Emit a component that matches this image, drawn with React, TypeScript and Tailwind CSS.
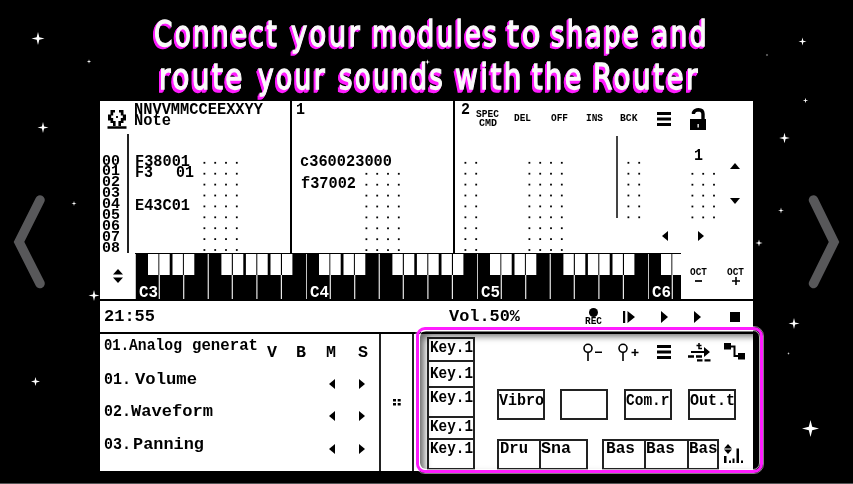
import { useLayoutEffect, useRef, type ReactNode } from "react";

// One line of text stretched to the width given by its classes.
function Fit({ className = "", children }: { className?: string; children: ReactNode }) {
  const box = useRef<HTMLDivElement>(null);
  const text = useRef<HTMLSpanElement>(null);
  useLayoutEffect(() => {
    if (!box.current || !text.current) return;
    text.current.style.transform = "none";
    const ratio = box.current.getBoundingClientRect().width / text.current.getBoundingClientRect().width;
    text.current.style.transform = `scaleX(${ratio})`;
  });
  return (
    <div ref={box} className={`shrink-0 ${className}`}>
      <span ref={text} className="inline-block origin-left whitespace-pre align-top">{children}</span>
    </div>
  );
}

const T = ({ className = "", children }: { className?: string; children: ReactNode }) => (
  <Fit className={`h-3 text-[16.5px] leading-3 ${className}`}>{children}</Fit>
);

const Small = ({ className = "", children }: { className?: string; children: ReactNode }) => (
  <Fit className={`h-[9px] text-[10.5px] leading-[9px] ${className}`}>{children}</Fit>
);

// Empty tracker steps, drawn as a dot matrix.
function Dots({ cols, rows, className = "" }: { cols: number; rows: number; className?: string }) {
  return (
    <svg className={`shrink-0 ${className}`} width={cols * 10.8} height={rows * 10.9}>
      {Array.from({ length: rows * cols }, (_, i) => (
        <rect key={i} x={(i % cols) * 10.8 + 4.5} y={Math.floor(i / cols) * 10.9 + 7.9} width="1.8" height="1.8" />
      ))}
    </svg>
  );
}

const Left = ({ className = "" }: { className?: string }) => (
  <svg className={`h-[10px] w-[6px] shrink-0 ${className}`} viewBox="0 0 6 10"><path d="M6 0V10L0 5Z" /></svg>
);
const Right = ({ className = "" }: { className?: string }) => (
  <svg className={`h-[10px] w-[6px] shrink-0 ${className}`} viewBox="0 0 6 10"><path d="M0 0V10L6 5Z" /></svg>
);
const Play = ({ className = "" }: { className?: string }) => (
  <svg className={`h-3 w-[7px] shrink-0 ${className}`} viewBox="0 0 7 12"><path d="M0 0V12L7 6Z" /></svg>
);
const Menu = ({ className = "" }: { className?: string }) => (
  <svg className={`h-[14px] w-[14px] shrink-0 ${className}`} viewBox="0 0 14 14">
    <path d="M0 0H14V3H0ZM0 5.4H14V8.6H0ZM0 11H14V14H0Z" />
  </svg>
);

const boxes = [13, 24.3, 37.5, 48.9, 86.4, 97.9, 110.9, 122.3, 135.5, 147];
const Octave = ({ label, className = "w-[171px]" }: { label: string; className?: string }) => (
  <div className={`relative h-[46px] shrink-0 ${className}`}>
    <svg className="h-[46px] w-full">
      {boxes.map((x) => <rect key={x} x={x} y="1" width="10.4" height="21" fill="#fff" />)}
      {[24.3, 48.7, 97.3, 121.9, 146.4].map((x) => <rect key={x} x={x - 0.6} y="22" width="1.2" height="24" fill="#e8e8e8" />)}
      <path d="M.3 1V46M73.3 1V46" stroke="#c4c4c4" strokeWidth="1.4" />
    </svg>
    <T className="absolute left-[4px] top-[34px] w-[19px] text-white">{label}</T>
  </div>
);

const stars: [number, number, number][] = [
  [38, 38.5, 6.5], [89, 61.5, 2.2], [427.5, 62, 2.8], [43, 127.5, 5.5], [74, 203.5, 2.6], [94, 295.5, 5.5],
  [35.5, 381.5, 4.5], [802.5, 41.5, 4], [767, 55, 1.3], [805.5, 100.5, 2.8], [784.5, 138, 5.3],
  [781, 210.5, 3], [759, 243, 3.6], [794, 323.5, 5.5], [788.5, 353.5, 1.5], [810.5, 428.5, 8.5],
];

const Heading = ({ words, className = "" }: { words: [string, string][]; className?: string }) => (
  <div className={`flex h-[43px] leading-[43px] ${className}`}>
    {words.map(([word, cls]) => <Fit key={word} className={cls}>{word}</Fit>)}
  </div>
);

const Param = ({ no, className = "", children }: { no: string; className?: string; children: ReactNode }) => (
  <div className={`flex ${className}`}>
    <div className="flex w-[225px] shrink-0"><T className="w-[27px]">{no}</T>{children}</div>
    <Left className="mt-[5px]" />
    <Right className="ml-6 mt-[5px]" />
  </div>
);

const Node = ({ className = "", children }: { className?: string; children?: ReactNode }) => (
  <div className={`h-[31px] shrink-0 border-2 border-[#222] ${className}`}>{children}</div>
);

const KeySlot = ({ className = "" }: { className?: string }) => (
  <div className={`border-b-2 border-[#222] pl-[1px] ${className}`}><T className="w-[43px]">Key.1</T></div>
);

export default function App() {
  return (
    <div className="relative h-[484px] w-[853px] overflow-hidden border-b border-[#555] bg-black font-['Liberation_Mono',monospace] font-bold text-black">
      <svg className="absolute inset-0" width="853" height="484" fill="#fff">
        {stars.map(([x, y, r]) => {
          const k = r * 0.2;
          return <path key={`${x}-${y}`} d={`M${x} ${y - r}L${x + k} ${y - k}L${x + r} ${y}L${x + k} ${y + k}L${x} ${y + r}L${x - k} ${y + k}L${x - r} ${y}L${x - k} ${y - k}Z`} />;
        })}
        <path d="M40 200L19 242L40 283.5M813.5 200L834 242L813.5 283.5" fill="none" stroke="#58585a" strokeWidth="9.5" strokeLinecap="round" />
      </svg>

      <header className="relative h-[101px] pt-3 font-['DejaVu_Sans',sans-serif] text-[35.5px] font-normal tracking-[3px] text-[#fafafa] [-webkit-text-stroke:1.3px_#fafafa]">
        <Heading
          className="[filter:drop-shadow(-1px_1px_0_#ff1cff)_drop-shadow(-1px_1px_0_#ff1cff)]"
          words={[
            ["Connect", "ml-[154px] w-[125px]"], ["your", "ml-[12px] w-[71px]"], ["modules", "ml-[10px] w-[127px]"],
            ["to", "ml-[8px] w-[36px]"], ["shape", "ml-[8px] w-[90px]"], ["and", "ml-[11px] w-[57px]"],
          ]}
        />
        <Heading
          className="[filter:drop-shadow(-1px_1px_0_#ff1cff)_drop-shadow(-1px_2px_0_#ff1cff)]"
          words={[
            ["route", "ml-[159px] w-[86px]"], ["your", "ml-[13px] w-[69px]"], ["sounds", "ml-[12px] w-[106px]"],
            ["with", "ml-[10px] w-[69px]"], ["the", "ml-[8px] w-[52px]"], ["Router", "ml-[9px] w-[107px]"],
          ]}
        />
      </header>

      <main className="relative ml-[100px] flex h-[370px] w-[653px] flex-col bg-white">
        <section className="flex h-[152px] shrink-0">
          <div className="w-[34px]">
            <svg className="ml-[7px] mt-2 h-5 w-5" viewBox="0 0 20 20">
              <path d="M3.5 1H8V3.5H6.2V6.5H4.2V9H6.2V12H8.6V17H6V14H3.5V11.5H1V5.5H3.5ZM16.5 1H12V3.5H13.8V6.5H15.8V9H13.8V12H11.4V17H14V14H16.5V11.5H19V5.5H16.5Z" />
              <path d="M9.1 7H10.9V9H9.1ZM.5 17.2H19.5V19.7H.5Z" />
            </svg>
            <div className="flex">
              <div className="ml-[2px] mt-[27.6px] w-[18px]">
                {["00", "01", "02", "03", "04", "05", "06", "07", "08"].map((n) => (
                  <Fit key={n} className="h-[10.9px] w-[18px] text-[15px] leading-[10.9px]">{n}</Fit>
                ))}
              </div>
              <div className="ml-[7px] mt-[5px] h-[119px] w-[2px] bg-[#222]" />
            </div>
          </div>

          <div className="w-[156px]">
            <div className="h-[52.8px] pt-[2.5px]">
              <T className="w-[129px]">NNVVMMCCEEXXYY</T>
              <T className="-mt-[.5px] w-[37px]">Note</T>
            </div>
            <div className="flex">
              <div className="w-[64.6px] pt-[2px]">
                <T className="ml-[.5px] w-[55px]">F38001</T>
                <div className="-mt-[1px] flex"><T className="ml-[.5px] w-[18px]">F3</T><T className="ml-[23.5px] w-[18px]">01</T></div>
                <T className="ml-[.5px] mt-[21px] w-[55px]">E43C01</T>
              </div>
              <Dots cols={4} rows={9} />
            </div>
          </div>

          <div className="w-[163px] border-l-2 border-black">
            <div className="h-[52.8px] pt-[2.5px]"><T className="ml-[4px] w-[9px]">1</T></div>
            <div className="flex">
              <div className="w-[69.3px] pt-[2px]">
                <T className="ml-[8px] w-[92px]">c360023000</T>
                <T className="ml-[9px] mt-[10px] w-[55px]">f37002</T>
              </div>
              <Dots cols={4} rows={8} className="mt-[10.9px]" />
            </div>
          </div>

          <div className="w-[300px] border-l-2 border-black">
            <div className="flex h-[52.8px] items-start">
              <T className="ml-[6px] mt-[2.5px] w-[9px]">2</T>
              <div className="ml-[6px] mt-[9px] w-[23px]">
                <Small className="w-[23px]">SPEC</Small>
                <Small className="ml-[3px] w-[18px]">CMD</Small>
              </div>
              <Small className="ml-[15px] mt-[12.5px] w-[17px]">DEL</Small>
              <Small className="ml-[19.5px] mt-[12.5px] w-[17px]">OFF</Small>
              <Small className="ml-[18.5px] mt-[12.5px] w-[17px]">INS</Small>
              <Small className="ml-[16.5px] mt-[12.5px] w-[17.5px]">BCK</Small>
              <Menu className="ml-5 mt-[11px]" />
              <svg className="ml-[19px] mt-[7px] h-[22px] w-[16px]" viewBox="0 0 16 22">
                <path d="M3.5 6V4.5Q5 1.8 8.5 1.8Q13 2 13 6V12" fill="none" stroke="#000" strokeWidth="3.4" />
                <path d="M0 11H16V22H0Z" /><path d="M7.5 16H8.8V19.5H7.5Z" fill="#fff" />
              </svg>
            </div>
            <div className="flex">
              <Dots cols={2} rows={9} className="ml-[4.6px]" />
              <Dots cols={4} rows={9} className="ml-[43px]" />
              <div className="-mt-[17.5px] ml-[49px] h-[82px] w-[2px] bg-[#444]" />
              <Dots cols={2} rows={6} className="ml-[4.3px]" />
              <div className="w-[81px]">
                <T className="-mt-1 ml-[50px] w-[9px]">1</T>
                <Dots cols={3} rows={5} className="ml-[42.7px] mt-[2.9px]" />
                <div className="mt-[11.5px] flex"><Left className="ml-[18px]" /><Right className="ml-[30px]" /></div>
              </div>
              <div className="ml-[4.5px] mt-[9px] w-[10px]">
                <svg className="block h-[6px] w-[10px]" viewBox="0 0 10 6"><path d="M0 6H10L5 0Z" /></svg>
                <svg className="mt-[29.5px] block h-[6px] w-[10px]" viewBox="0 0 10 6"><path d="M0 0H10L5 6Z" /></svg>
              </div>
            </div>
          </div>
        </section>

        <section className="flex h-[48px] shrink-0 border-b-2 border-black">
          <svg className="ml-[13px] mr-[12px] mt-[16px] h-[14px] w-[10px]" viewBox="0 0 10 14"><path d="M0 5.6H10L5 0ZM0 8.4H10L5 14Z" /></svg>
          <div className="flex h-[46px] w-[546px] bg-black">
            <Octave label="C3" /><Octave label="C4" /><Octave label="C5" /><Octave label="C6" className="w-[33px]" />
          </div>
          <div className="ml-[9px] mt-[15px] flex flex-col items-center">
            <Small className="w-[17px]">OCT</Small>
            <div className="mt-[3px] h-[2px] w-[7px] bg-[#222]" />
          </div>
          <div className="ml-[20px] mt-[15px] flex flex-col items-center">
            <Small className="w-[17px]">OCT</Small>
            <svg className="h-[8px] w-[8px]" viewBox="0 0 8 8"><path d="M4 0V8M0 4H8" stroke="#000" strokeWidth="1.6" /></svg>
          </div>
        </section>

        <section className="flex h-[33px] shrink-0 items-start border-b-2 border-black">
          <T className="ml-1 mt-[10px] w-[51px]">21:55</T>
          <T className="ml-[294px] mt-[10px] w-[71px]">Vol.50%</T>
          <div className="ml-[65px] mt-[7px] w-[17px]">
            <div className="ml-1 h-[8.5px] w-[8.5px] rounded-full bg-black" />
            <Small className="mt-[.5px] w-[17px]">REC</Small>
          </div>
          <svg className="ml-[21px] mt-[10px] h-3 w-[12px]" viewBox="0 0 12 12"><path d="M0 0H2.2V12H0ZM4.5 0V12L12 6Z" /></svg>
          <Play className="ml-[26px] mt-[10px]" />
          <Play className="ml-[26px] mt-[10px]" />
          <div className="ml-[29px] mt-[11px] h-[10px] w-[10px] bg-black" />
        </section>

        <section className="flex h-[137px] shrink-0">
          <div className="w-[279px] pl-1">
            <div className="flex pt-[5.5px]">
              <T className="w-[25px]">01.</T><T className="w-[53px]">Analog</T><T className="ml-[10px] w-[66px]">generat</T>
              <T className="ml-[9px] mt-[7px] w-[10px]">V</T><T className="ml-[19px] mt-[7px] w-[10px]">B</T>
              <T className="ml-[20px] mt-[7px] w-[10px]">M</T><T className="ml-[22px] mt-[7px] w-[10px]">S</T>
            </div>
            <Param no="01." className="mt-[15px]"><T className="ml-[4px] w-[62px]">Volume</T></Param>
            <Param no="02." className="mt-[17px]"><T className="w-[82px]">Waveform</T></Param>
            <Param no="03." className="mt-[18px]"><T className="ml-[2px] w-[71px]">Panning</T></Param>
          </div>
          <div className="flex w-[35px] shrink-0 items-center justify-center border-x-2 border-[#222]">
            <svg className="h-[7px] w-[8px]" viewBox="0 0 8 7"><path d="M0 0H3V2.6H0ZM4.7 0H7.7V2.6H4.7ZM0 4H3V6.6H0ZM4.7 4H7.7V6.6H4.7Z" /></svg>
          </div>
          <div className="flex w-[339px] shrink-0 pt-[3px]">
            <div className="ml-[13px] flex w-[47.5px] shrink-0 flex-col border-x-2 border-t-2 border-[#222]">
              <KeySlot className="h-[23px] pt-[2.5px]" />
              <KeySlot className="h-[26px] pt-[5.5px]" />
              <KeySlot className="h-[30px] pt-[4px]" />
              <KeySlot className="h-[22px] pt-[2.5px]" />
              <KeySlot className="h-[30px] pt-[2.5px]" />
            </div>
            <div className="w-[278.5px] shrink-0">
              <div className="flex h-[52px] items-start pl-[108.5px] pt-[6px]">
                <svg className="h-[19px] w-[19px]" viewBox="0 0 19 19" fill="none" stroke="#000" strokeWidth="1.6"><circle cx="5" cy="5.3" r="4" /><path d="M5 9.3V18M12 9.3H19" /></svg>
                <svg className="ml-[16px] h-[19px] w-[21px]" viewBox="0 0 21 19" fill="none" stroke="#000" strokeWidth="1.6"><circle cx="5" cy="5.3" r="4" /><path d="M5 9.3V18M13.5 9.5H20.5M17 6V13" /></svg>
                <Menu className="ml-[18px] mt-[2px]" />
                <svg className="ml-[17px] h-[19px] w-[23px]" viewBox="0 0 23 19">
                  <path d="M3 8H16V4L22 9L16 14V10H3ZM0 12.3H6V14.7H0ZM8 12.3H14V14.7H8ZM9 16.3H14.5V18.5H9ZM16.5 16.3H22.5V18.5H16.5Z" />
                  <path d="M11 0V5.5H14M8.5 2.5H13.5" fill="none" stroke="#000" strokeWidth="1.5" />
                </svg>
                <svg className="ml-[12.5px] h-[19px] w-[21px]" viewBox="0 0 21 19">
                  <path d="M0 0H7V6.5H0ZM14 10H21V16.5H14Z" /><path d="M6 3.5H10.5V13H15" fill="none" stroke="#000" strokeWidth="2" />
                </svg>
              </div>
              <div className="flex pl-[22.5px]">
                <Node className="w-[48px] pt-[4px]"><T className="-ml-[.5px] w-[45px]">Vibro</T></Node>
                <Node className="ml-[15px] w-[48px]" />
                <Node className="ml-[16px] w-[48px] pt-[4px]"><T className="w-[43.5px]">Com.r</T></Node>
                <Node className="ml-[16px] w-[48px] pt-[4px]"><T className="-ml-[.5px] w-[45px]">Out.t</T></Node>
              </div>
              <div className="mt-[18.5px] flex pl-[22.5px]">
                <Node className="w-[42px] border-r-0 pl-[1px] pt-[2px]"><T className="w-[28px]">Dru</T></Node>
                <Node className="w-[49px] pt-[2px]"><T className="w-[30px]">Sna</T></Node>
                <Node className="ml-[14px] w-[42px] border-r-0 pl-[2px] pt-[2px]"><T className="w-[29px]">Bas</T></Node>
                <Node className="w-[42.5px] border-r-0 pt-[2px]"><T className="w-[29px]">Bas</T></Node>
                <Node className="w-[32px] pt-[2px]"><T className="w-[28.5px]">Bas</T></Node>
                <svg className="ml-[5.5px] mt-[5px] h-[20px] w-[20px]" viewBox="0 0 20 20">
                  <path d="M0 4.6H8L4 0ZM0 5.4H8L4 10ZM0 12H2.5V19H0ZM5 16.5H7V19H5ZM8.5 14.5H10.5V19H8.5ZM12.5 4.5H15V19H12.5ZM17 16.5H19V19H17Z" />
                </svg>
              </div>
            </div>
          </div>
        </section>
      </main>

      <div className="absolute left-[415px] top-[325.5px] h-[148.5px] w-[349px] rounded-[10px] border border-white/50">
        <div className="h-full w-full rounded-[9px] border-[3px] border-[#ff1cff]">
          <div className="h-full w-full rounded-[7px] border border-white/70 shadow-[inset_4px_5px_7px_rgba(0,0,0,0.6)]" />
        </div>
      </div>
    </div>
  );
}
